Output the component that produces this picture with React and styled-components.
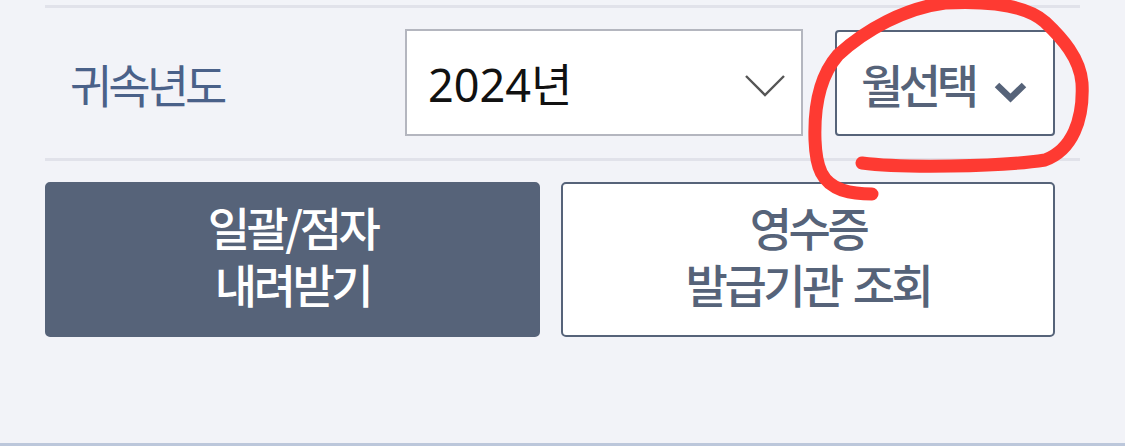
import React from 'react';
import styled, { createGlobalStyle } from 'styled-components';

const GlobalStyle = createGlobalStyle`
  html, body {
    margin: 0;
    padding: 0;
    background: #f2f3f8;
  }
  body {
    font-family: "Noto Sans CJK KR", "Noto Sans", sans-serif;
  }
`;

const Screen = styled.div`
  position: relative;
  width: 1125px;
  height: 446px;
  overflow: hidden;
  background: #f2f3f8;
  display: flex;
  flex-direction: column;
  border-bottom: 3px solid #bcc7db;
  box-sizing: border-box;
`;

const Section = styled.div`
  padding: 5px 45px 0 45px;
`;

const Divider = styled.div`
  height: 3px;
  background: #e1e2ea;
`;

const FieldRow = styled.div`
  display: flex;
  align-items: center;
  padding: 21px 25px 22px 25px;
`;

const Label = styled.div`
  width: 335px;
  font-size: 46px;
  letter-spacing: -4px;
  color: #4a6189;
  line-height: 1;
`;

const Select = styled.div`
  box-sizing: border-box;
  width: 398px;
  height: 107px;
  border: 2px solid #b4b6bf;
  background: #fff;
  display: flex;
  align-items: center;
  justify-content: space-between;
  padding: 0 16px 0 21px;
  font-family: "Noto Sans", "Noto Sans CJK KR", sans-serif;
  font-size: 45px;
  color: #111;
`;

const ThinChevronIcon = styled.svg`
  margin-top: 6px;
`;

const MonthButton = styled.div`
  box-sizing: border-box;
  width: 220px;
  height: 106px;
  margin-left: 32px;
  border: 2px solid #566379;
  border-radius: 4px;
  background: #fff;
  display: flex;
  align-items: center;
  padding: 0 24px 0 24px;
  gap: 20px;
  font-size: 46px;
  font-weight: 500;
  letter-spacing: -4.5px;
  color: #566379;
`;

const BoldChevronIcon = styled.svg`
  margin-top: 18px;
`;

const ButtonRow = styled.div`
  display: grid;
  grid-template-columns: 495px 494px;
  gap: 21px;
  padding-top: 21px;
`;

const ActionButton = styled.div`
  box-sizing: border-box;
  height: 155px;
  border-radius: 5px;
  border: 2px solid #566379;
  background: ${p => (p.$primary ? '#566379' : '#fff')};
  color: ${p => (p.$primary ? '#fff' : '#566379')};
  display: flex;
  flex-direction: column;
  align-items: center;
  justify-content: center;
  padding-bottom: 10px;
  font-size: 46px;
  font-weight: 500;
  letter-spacing: -3.5px;
  word-spacing: 5px;
  line-height: 57px;
  text-align: center;
`;

const Annotation = styled.svg`
  position: absolute;
  left: 0;
  top: 0;
  pointer-events: none;
`;

const ThinChevron = () => (
  <ThinChevronIcon width="40" height="24" viewBox="0 0 40 24">
    <path d="M1 2 L20 21 L39 2" fill="none" stroke="#555" strokeWidth="2.4" />
  </ThinChevronIcon>
);

const BoldChevron = () => (
  <BoldChevronIcon width="33" height="22" viewBox="0 0 33 22">
    <path d="M3 4 L16.5 17 L30 4" fill="none" stroke="#566379" strokeWidth="6.5" strokeLinejoin="miter" />
  </BoldChevronIcon>
);

export default function App() {
  return (
    <>
      <GlobalStyle />
      <Screen>
        <Section>
          <Divider />
          <FieldRow>
            <Label>귀속년도</Label>
            <Select>
              <span>2024년</span>
              <ThinChevron />
            </Select>
            <MonthButton>
              <span>월선택</span>
              <BoldChevron />
            </MonthButton>
          </FieldRow>
          <Divider />
          <ButtonRow>
            <ActionButton $primary>
              <span>일괄/점자</span>
              <span>내려받기</span>
            </ActionButton>
            <ActionButton>
              <span>영수증</span>
              <span>발급기관 조회</span>
            </ActionButton>
          </ButtonRow>
        </Section>
        <Annotation width="1125" height="446" viewBox="0 0 1125 446">
          <path
            d="M862 163 C900 168 1000 167 1045 160 C1072 150 1084 120 1082 83 C1080 58 1062 38 1045 22 C1025 4 985 1 945 3 C905 8 865 30 838 55 C818 78 814 110 815 140 C816 168 822 183 842 190 C855 194 864 194 872 194"
            fill="none"
            stroke="#fe3a32"
            strokeWidth="13"
            strokeLinecap="round"
          />
        </Annotation>
      </Screen>
    </>
  );
}
